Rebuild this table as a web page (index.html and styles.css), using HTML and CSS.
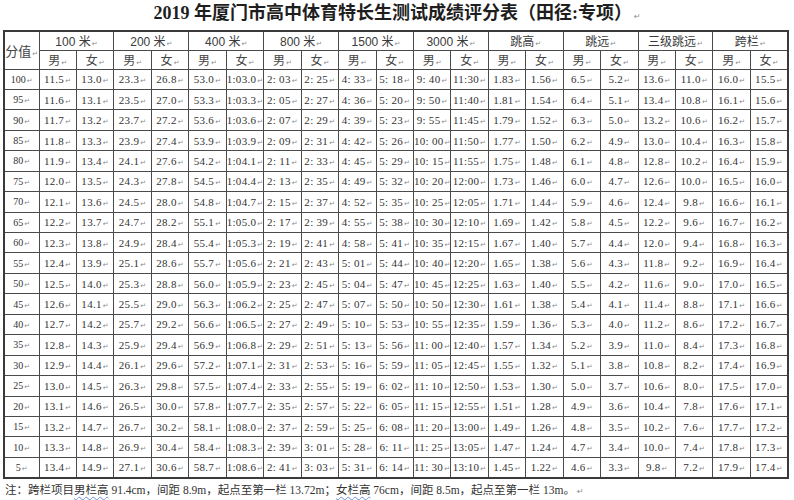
FILE: index.html
```html
<!DOCTYPE html>
<html lang="zh-CN">
<head>
<meta charset="utf-8">
<title>2019年厦门市高中体育特长生测试成绩评分表</title>
<link rel="stylesheet" href="styles.css">
</head>
<body>
<h1 class="title">2019 年厦门市高中体育特长生测试成绩评分表（田径:专项）<span class="pm">↵</span></h1>
<table class="score">
<colgroup>
<col class="c0"><col class="c"><col class="c"><col class="c"><col class="c"><col class="c"><col class="c"><col class="c"><col class="c"><col class="c"><col class="c"><col class="c"><col class="c"><col class="c"><col class="c"><col class="c"><col class="c"><col class="c"><col class="c"><col class="c"><col class="c">
</colgroup>
<thead>
<tr class="hr1">
<th rowspan="2" class="fz">分值</th>
<th colspan="2" class="ev">100 米</th>
<th colspan="2" class="ev">200 米</th>
<th colspan="2" class="ev">400 米</th>
<th colspan="2" class="ev">800 米</th>
<th colspan="2" class="ev">1500 米</th>
<th colspan="2" class="ev">3000 米</th>
<th colspan="2" class="ev">跳高</th>
<th colspan="2" class="ev">跳远</th>
<th colspan="2" class="ev">三级跳远</th>
<th colspan="2" class="ev">跨栏</th>
</tr>
<tr class="hr2">
<th>男</th><th>女</th><th>男</th><th>女</th><th>男</th><th>女</th><th>男</th><th>女</th><th>男</th><th>女</th><th>男</th><th>女</th><th>男</th><th>女</th><th>男</th><th>女</th><th>男</th><th>女</th><th>男</th><th>女</th>
</tr>
</thead>
<tbody>
<tr><td>100</td><td>11.5</td><td>13.0</td><td>23.3</td><td>26.8</td><td>53.0</td><td>1:03.0</td><td>2: 03</td><td>2: 25</td><td>4: 33</td><td>5: 18</td><td>9: 40</td><td>11:30</td><td>1.83</td><td>1.56</td><td>6.5</td><td>5.2</td><td>13.6</td><td>11.0</td><td>16.0</td><td>15.5</td></tr>
<tr><td>95</td><td>11.6</td><td>13.1</td><td>23.5</td><td>27.0</td><td>53.3</td><td>1:03.3</td><td>2: 05</td><td>2: 27</td><td>4: 36</td><td>5: 20</td><td>9: 50</td><td>11:40</td><td>1.81</td><td>1.54</td><td>6.4</td><td>5.1</td><td>13.4</td><td>10.8</td><td>16.1</td><td>15.6</td></tr>
<tr><td>90</td><td>11.7</td><td>13.2</td><td>23.7</td><td>27.2</td><td>53.6</td><td>1:03.6</td><td>2: 07</td><td>2: 29</td><td>4: 39</td><td>5: 23</td><td>9: 55</td><td>11:45</td><td>1.79</td><td>1.52</td><td>6.3</td><td>5.0</td><td>13.2</td><td>10.6</td><td>16.2</td><td>15.7</td></tr>
<tr><td>85</td><td>11.8</td><td>13.3</td><td>23.9</td><td>27.4</td><td>53.9</td><td>1:03.9</td><td>2: 09</td><td>2: 31</td><td>4: 42</td><td>5: 26</td><td>10: 00</td><td>11:50</td><td>1.77</td><td>1.50</td><td>6.2</td><td>4.9</td><td>13.0</td><td>10.4</td><td>16.3</td><td>15.8</td></tr>
<tr><td>80</td><td>11.9</td><td>13.4</td><td>24.1</td><td>27.6</td><td>54.2</td><td>1:04.1</td><td>2: 11</td><td>2: 33</td><td>4: 45</td><td>5: 29</td><td>10: 15</td><td>11:55</td><td>1.75</td><td>1.48</td><td>6.1</td><td>4.8</td><td>12.8</td><td>10.2</td><td>16.4</td><td>15.9</td></tr>
<tr><td>75</td><td>12.0</td><td>13.5</td><td>24.3</td><td>27.8</td><td>54.5</td><td>1:04.4</td><td>2: 13</td><td>2: 35</td><td>4: 49</td><td>5: 32</td><td>10: 20</td><td>12:00</td><td>1.73</td><td>1.46</td><td>6.0</td><td>4.7</td><td>12.6</td><td>10.0</td><td>16.5</td><td>16.0</td></tr>
<tr><td>70</td><td>12.1</td><td>13.6</td><td>24.5</td><td>28.0</td><td>54.8</td><td>1:04.7</td><td>2: 15</td><td>2: 37</td><td>4: 52</td><td>5: 35</td><td>10: 25</td><td>12:05</td><td>1.71</td><td>1.44</td><td>5.9</td><td>4.6</td><td>12.4</td><td>9.8</td><td>16.6</td><td>16.1</td></tr>
<tr><td>65</td><td>12.2</td><td>13.7</td><td>24.7</td><td>28.2</td><td>55.1</td><td>1:05.0</td><td>2: 17</td><td>2: 39</td><td>4: 55</td><td>5: 38</td><td>10: 30</td><td>12:10</td><td>1.69</td><td>1.42</td><td>5.8</td><td>4.5</td><td>12.2</td><td>9.6</td><td>16.7</td><td>16.2</td></tr>
<tr><td>60</td><td>12.3</td><td>13.8</td><td>24.9</td><td>28.4</td><td>55.4</td><td>1:05.3</td><td>2: 19</td><td>2: 41</td><td>4: 58</td><td>5: 41</td><td>10: 35</td><td>12:15</td><td>1.67</td><td>1.40</td><td>5.7</td><td>4.4</td><td>12.0</td><td>9.4</td><td>16.8</td><td>16.3</td></tr>
<tr><td>55</td><td>12.4</td><td>13.9</td><td>25.1</td><td>28.6</td><td>55.7</td><td>1:05.6</td><td>2: 21</td><td>2: 43</td><td>5: 01</td><td>5: 44</td><td>10: 40</td><td>12:20</td><td>1.65</td><td>1.38</td><td>5.6</td><td>4.3</td><td>11.8</td><td>9.2</td><td>16.9</td><td>16.4</td></tr>
<tr><td>50</td><td>12.5</td><td>14.0</td><td>25.3</td><td>28.8</td><td>56.0</td><td>1:05.9</td><td>2: 23</td><td>2: 45</td><td>5: 04</td><td>5: 47</td><td>10: 45</td><td>12:25</td><td>1.63</td><td>1.40</td><td>5.5</td><td>4.2</td><td>11.6</td><td>9.0</td><td>17.0</td><td>16.5</td></tr>
<tr><td>45</td><td>12.6</td><td>14.1</td><td>25.5</td><td>29.0</td><td>56.3</td><td>1:06.2</td><td>2: 25</td><td>2: 47</td><td>5: 07</td><td>5: 50</td><td>10: 50</td><td>12:30</td><td>1.61</td><td>1.38</td><td>5.4</td><td>4.1</td><td>11.4</td><td>8.8</td><td>17.1</td><td>16.6</td></tr>
<tr><td>40</td><td>12.7</td><td>14.2</td><td>25.7</td><td>29.2</td><td>56.6</td><td>1:06.5</td><td>2: 27</td><td>2: 49</td><td>5: 10</td><td>5: 53</td><td>10: 55</td><td>12:35</td><td>1.59</td><td>1.36</td><td>5.3</td><td>4.0</td><td>11.2</td><td>8.6</td><td>17.2</td><td>16.7</td></tr>
<tr><td>35</td><td>12.8</td><td>14.3</td><td>25.9</td><td>29.4</td><td>56.9</td><td>1:06.8</td><td>2: 29</td><td>2: 51</td><td>5: 13</td><td>5: 56</td><td>11: 00</td><td>12:40</td><td>1.57</td><td>1.34</td><td>5.2</td><td>3.9</td><td>11.0</td><td>8.4</td><td>17.3</td><td>16.8</td></tr>
<tr><td>30</td><td>12.9</td><td>14.4</td><td>26.1</td><td>29.6</td><td>57.2</td><td>1:07.1</td><td>2: 31</td><td>2: 53</td><td>5: 16</td><td>5: 59</td><td>11: 05</td><td>12:45</td><td>1.55</td><td>1.32</td><td>5.1</td><td>3.8</td><td>10.8</td><td>8.2</td><td>17.4</td><td>16.9</td></tr>
<tr><td>25</td><td>13.0</td><td>14.5</td><td>26.3</td><td>29.8</td><td>57.5</td><td>1:07.4</td><td>2: 33</td><td>2: 55</td><td>5: 19</td><td>6: 02</td><td>11: 10</td><td>12:50</td><td>1.53</td><td>1.30</td><td>5.0</td><td>3.7</td><td>10.6</td><td>8.0</td><td>17.5</td><td>17.0</td></tr>
<tr><td>20</td><td>13.1</td><td>14.6</td><td>26.5</td><td>30.0</td><td>57.8</td><td>1:07.7</td><td>2: 35</td><td>2: 57</td><td>5: 22</td><td>6: 05</td><td>11: 15</td><td>12:55</td><td>1.51</td><td>1.28</td><td>4.9</td><td>3.6</td><td>10.4</td><td>7.8</td><td>17.6</td><td>17.1</td></tr>
<tr><td>15</td><td>13.2</td><td>14.7</td><td>26.7</td><td>30.2</td><td>58.1</td><td>1:08.0</td><td>2: 37</td><td>2: 59</td><td>5: 25</td><td>6: 08</td><td>11: 20</td><td>13:00</td><td>1.49</td><td>1.26</td><td>4.8</td><td>3.5</td><td>10.2</td><td>7.6</td><td>17.7</td><td>17.2</td></tr>
<tr><td>10</td><td>13.3</td><td>14.8</td><td>26.9</td><td>30.4</td><td>58.4</td><td>1:08.3</td><td>2: 39</td><td>3: 01</td><td>5: 28</td><td>6: 11</td><td>11: 25</td><td>13:05</td><td>1.47</td><td>1.24</td><td>4.7</td><td>3.4</td><td>10.0</td><td>7.4</td><td>17.8</td><td>17.3</td></tr>
<tr><td>5</td><td>13.4</td><td>14.9</td><td>27.1</td><td>30.6</td><td>58.7</td><td>1:08.6</td><td>2: 41</td><td>3: 03</td><td>5: 31</td><td>6: 14</td><td>11: 30</td><td>13:10</td><td>1.45</td><td>1.22</td><td>4.6</td><td>3.3</td><td>9.8</td><td>7.2</td><td>17.9</td><td>17.4</td></tr>
</tbody>
</table>
<p class="note">注：跨栏项目<span class="sq">男栏高</span> 91.4cm，间距 8.9m，起点至第一栏 13.72m；<span class="sq">女栏高</span> 76cm，间距 8.5m，起点至第一栏 13m。<span class="pm">↵</span></p>
</body>
</html>
```
FILE: styles.css
```css
html, body {
  margin: 0;
  padding: 0;
  background: #ffffff;
}

body {
  width: 794px;
  height: 500px;
  overflow: hidden;
  color: #2b2b2b;
  font-family: "Liberation Serif", "Noto Sans CJK SC", serif;
}

.title {
  margin: 0;
  height: 30px;
  padding-top: 2px;
  box-sizing: border-box;
  line-height: 22px;
  font-size: 18px;
  font-weight: bold;
  text-align: center;
  color: #1e1e1e;
  font-family: "Liberation Serif", "Noto Sans CJK SC", serif;
}

.pm {
  font-size: 8px;
  font-weight: normal;
  color: #8a8a8a;
  margin-left: 2px;
  font-family: "DejaVu Sans", sans-serif;
}

.score {
  border-collapse: collapse;
  table-layout: fixed;
  width: 784px;
  margin-left: 3px;
  border: 2px solid #3a3a3a;
}

.c0 { width: 35px; }
.c { width: 37.45px; }

.score th,
.score td {
  border: 1px solid #4a4a4a;
  padding: 0;
  text-align: center;
  white-space: nowrap;
  overflow: hidden;
  font-weight: normal;
}

.score th::after,
.score td::after {
  content: "↵";
  font-size: 7px;
  color: #8a8a8a;
  margin-left: 1px;
  font-family: "DejaVu Sans", sans-serif;
}

.hr1 { height: 19px; }
.hr2 { height: 19px; }

.hr1 th {
  font-size: 12px;
  color: #3a3a3a;
  font-family: "Liberation Sans", "Noto Sans CJK SC", sans-serif;
}

.hr1 th.fz {
  font-size: 13px;
  font-family: "Noto Sans CJK SC", serif;
  color: #444;
}

.hr2 th {
  font-size: 12px;
  color: #444;
  font-family: "Noto Sans CJK SC", serif;
}

.score tbody tr { height: 20.45px; }

.score td {
  font-size: 11px;
  letter-spacing: 0.3px;
  color: #333;
  font-family: "Liberation Serif", serif;
}

.score td:first-child {
  font-size: 10px;
  letter-spacing: 0;
}

.note {
  margin: 0;
  padding: 2px 0 0 5px;
  line-height: 18px;
  font-size: 11.5px;
  color: #333;
  font-family: "Liberation Serif", "Noto Sans CJK SC", serif;
}

.sq {
  text-decoration: underline wavy #6d8fd6;
  text-decoration-thickness: 1px;
  text-underline-offset: 2px;
}
```
